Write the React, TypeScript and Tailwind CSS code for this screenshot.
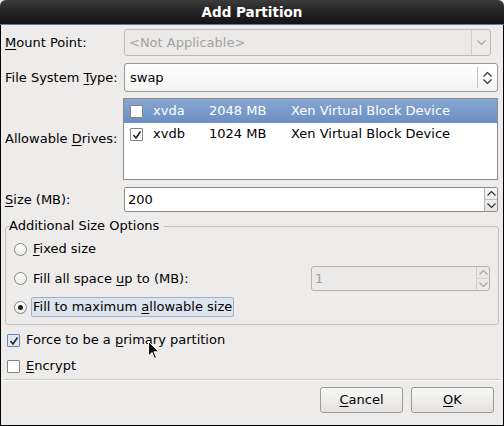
import React from 'react';

const ChevronDown = ({ color = '#555' }: { color?: string }) => (
  <svg width="9" height="5" viewBox="0 0 9 5">
    <path d="M0.5 0.5 L4.5 4.5 L8.5 0.5" fill="none" stroke={color} strokeWidth="1.2" />
  </svg>
);

const ChevronUp = ({ color = '#555' }: { color?: string }) => (
  <svg width="9" height="5" viewBox="0 0 9 5">
    <path d="M0.5 4.5 L4.5 0.5 L8.5 4.5" fill="none" stroke={color} strokeWidth="1.2" />
  </svg>
);

const Check = ({ color = '#222' }: { color?: string }) => (
  <svg width="10" height="10" viewBox="0 0 10 10" className="absolute left-[1px] top-[1px]">
    <path d="M1.5 5 L4 8 L8.5 1.5" fill="none" stroke={color} strokeWidth="1.6" />
  </svg>
);

const CheckBox = ({ checked, tone = 'plain' }: { checked?: boolean; tone?: 'plain' | 'blue' }) => (
  <span
    className={
      'relative block w-[13px] h-[13px] border rounded-[1px] shrink-0 ' +
      (tone === 'blue' ? 'border-[#6584b3] bg-[#dde6f2]' : 'border-[#868584] bg-white')
    }
  >
    {checked && <Check />}
  </span>
);

const Radio = ({ checked }: { checked?: boolean }) => (
  <span className="relative flex items-center justify-center w-[13px] h-[13px] rounded-full border border-[#858483] bg-gradient-to-b from-white to-[#ecebea] shrink-0">
    {checked && <span className="block w-[5px] h-[5px] rounded-full bg-[#222]" />}
  </span>
);

const Label = ({ children }: { children: React.ReactNode }) => (
  <div className="w-[122px] pl-[4px] shrink-0 leading-[16px]">{children}</div>
);

const U = ({ children }: { children: React.ReactNode }) => (
  <span className="underline decoration-1 underline-offset-[2px]">{children}</span>
);

export default function App() {
  return (
    <div className="relative w-[504px] h-[426px] bg-[#e5e4e3] font-['DejaVu_Sans',sans-serif] text-[13px] text-black flex flex-col">
      {/* title bar */}
      <div className="h-[25px] rounded-t-[6px] bg-gradient-to-b from-[#3c3c3c] via-[#232323] to-[#141414] border-b border-[#5f7ba5] flex items-center justify-center shrink-0">
        <span className="text-white font-bold text-[13.5px] leading-[16px]">Add Partition</span>
      </div>

      <div className="flex-1 bg-[#edeceb] border-x border-b border-black flex flex-col">
        {/* Mount point */}
        <div className="flex items-center mt-[4px]">
          <Label>
            <U>M</U>ount Point:
          </Label>
          <div className="w-[367px] h-[27px] ml-[1px] rounded-[3px] border border-[#bab9b8] bg-[#ebeae9] flex items-center">
            <span className="flex-1 pl-[4px] text-[#a3a2a1]">&lt;Not Applicable&gt;</span>
            <div className="w-[19px] h-full border-l border-[#cfcecd] flex items-center justify-center">
              <ChevronDown color="#a9a8a7" />
            </div>
          </div>
        </div>

        {/* FS type */}
        <div className="flex items-center mt-[7px]">
          <Label>
            File System <U>T</U>ype:
          </Label>
          <div className="w-[374px] h-[29px] ml-[1px] rounded-[3px] border border-[#9a9998] bg-gradient-to-b from-white to-[#f3f3f2] flex items-center">
            <span className="flex-1 pl-[5px]">swap</span>
            <div className="w-[20px] h-[21px] border-l border-[#c4c3c2] flex flex-col items-center justify-center gap-[2px]">
              <ChevronUp color="#333" />
              <ChevronDown color="#333" />
            </div>
          </div>
        </div>

        {/* Drives */}
        <div className="flex items-center mt-[6px]">
          <Label>
            Allowable <U>D</U>rives:
          </Label>
          <div className="w-[375px] h-[82px] border border-[#8e8d8c] bg-white flex flex-col">
            <div className="h-[24px] bg-gradient-to-b from-[#87a6d2] to-[#6b8fc3] text-white flex items-center">
              <span className="ml-[6px]">
                <CheckBox />
              </span>
              <span className="ml-[10px] w-[56px]">xvda</span>
              <span className="w-[82px]">2048 MB</span>
              <span>Xen Virtual Block Device</span>
            </div>
            <div className="h-[22px] flex items-center">
              <span className="ml-[6px]">
                <CheckBox checked />
              </span>
              <span className="ml-[10px] w-[56px]">xvdb</span>
              <span className="w-[82px]">1024 MB</span>
              <span>Xen Virtual Block Device</span>
            </div>
          </div>
        </div>

        {/* Size */}
        <div className="flex items-center mt-[7px]">
          <Label>
            <U>S</U>ize (MB):
          </Label>
          <div className="w-[374px] h-[25px] ml-[1px] rounded-[2px] border border-[#8e8d8c] bg-white flex items-stretch">
            <span className="flex-1 pl-[3px] flex items-center">200</span>
            <div className="w-[13px] border-l border-[#b5b4b3] flex flex-col bg-gradient-to-b from-[#f7f7f6] to-[#e6e5e4]">
              <div className="flex-1 flex items-center justify-center border-b border-[#c2c1c0]">
                <ChevronUp color="#333" />
              </div>
              <div className="flex-1 flex items-center justify-center">
                <ChevronDown color="#333" />
              </div>
            </div>
          </div>
        </div>

        {/* Additional size options */}
        <fieldset className="mt-[6px] mx-[4px] border border-[#c2c1c0] rounded-[3px] px-[8px] pt-[5px] pb-[7px] flex flex-col">
          <legend className="px-0 leading-[16px] -translate-x-[5px]">Additional Size Options</legend>
          <div className="flex items-center h-[20px]">
            <Radio />
            <span className="ml-[6px] leading-[16px]">
              <U>F</U>ixed size
            </span>
          </div>
          <div className="flex items-center h-[25px] mt-[7px]">
            <Radio />
            <span className="ml-[6px] flex-1 leading-[16px]">
              Fill all space <U>u</U>p to (MB):
            </span>
            <div className="w-[179px] h-[25px] rounded-[3px] border border-[#b3b2b1] bg-[#ebeae9] flex items-stretch">
              <span className="flex-1 pl-[3px] flex items-center text-[#a3a2a1]">1</span>
              <div className="w-[13px] border-l border-[#cdcccb] flex flex-col">
                <div className="flex-1 flex items-center justify-center border-b border-[#d2d1d0]">
                  <ChevronUp color="#a9a8a7" />
                </div>
                <div className="flex-1 flex items-center justify-center">
                  <ChevronDown color="#a9a8a7" />
                </div>
              </div>
            </div>
          </div>
          <div className="flex items-center h-[20px] mt-[6px]">
            <Radio checked />
            <span className="ml-[4px] h-[20px] px-[1px] flex items-center rounded-[2px] border border-[#9fb2cd] bg-[#dce4ee] leading-[16px]">
              <span>
                Fill to maximum <U>a</U>llowable size
              </span>
            </span>
          </div>
        </fieldset>

        {/* checkboxes */}
        <div className="flex items-center h-[20px] mt-[5px] pl-[6px]">
          <CheckBox checked tone="blue" />
          <span className="ml-[6px] leading-[16px]">
            Force to be a <U>p</U>rimary partition
          </span>
        </div>
        <div className="flex items-center h-[20px] mt-[6px] pl-[6px]">
          <CheckBox />
          <span className="ml-[6px] leading-[16px]">
            <U>E</U>ncrypt
          </span>
        </div>

        <div className="mt-[3px] mx-[3px] h-[2px] border-t border-[#c8c7c6] border-b border-b-white" />

        {/* buttons */}
        <div className="flex justify-end gap-[8px] mt-[6px] pr-[9px]">
          <button className="w-[83px] h-[26px] rounded-[3px] border border-[#9a9998] bg-gradient-to-b from-[#f8f8f7] to-[#e4e3e2] leading-[16px]">
            <U>C</U>ancel
          </button>
          <button className="w-[83px] h-[26px] rounded-[3px] border border-[#9a9998] bg-gradient-to-b from-[#f8f8f7] to-[#e4e3e2] leading-[16px]">
            <U>O</U>K
          </button>
        </div>
      </div>

      {/* mouse pointer */}
      <svg className="absolute left-[148px] top-[341px]" width="12" height="19" viewBox="0 0 12 19">
        <path d="M0.5 0.5 L0.5 15 L4 11.5 L6.5 17.5 L8.5 16.5 L6 10.8 L10.8 10.8 Z" fill="#111" stroke="#fff" strokeWidth="1" />
      </svg>
    </div>
  );
}
